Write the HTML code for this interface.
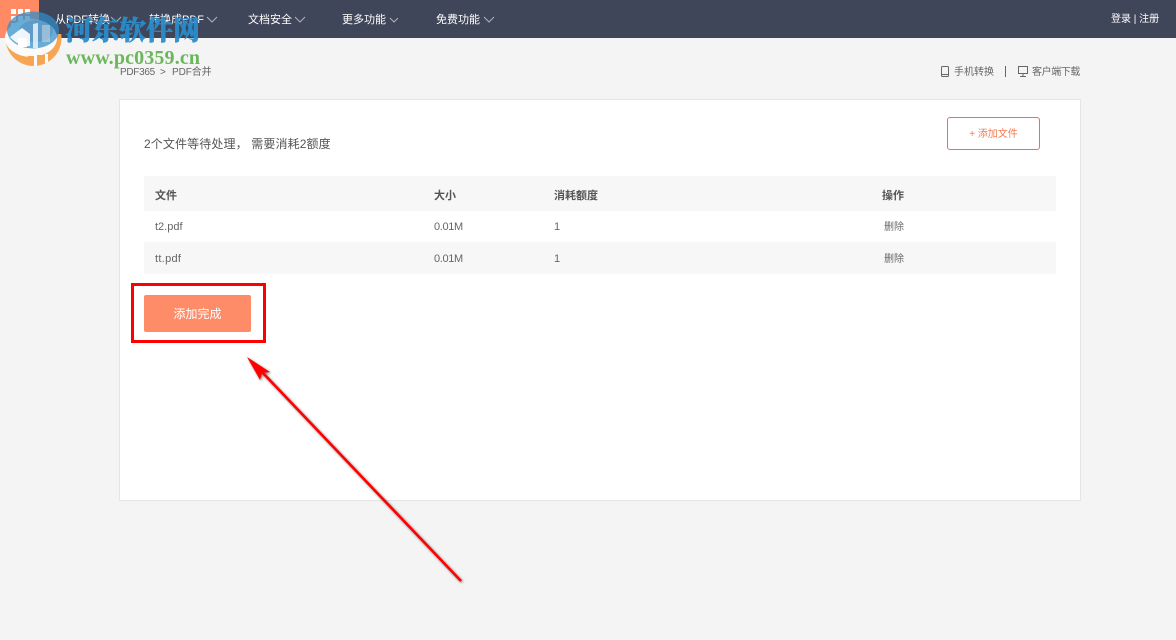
<!DOCTYPE html>
<html><head><meta charset="utf-8"><style>
html,body{margin:0;padding:0}
body{width:1176px;height:640px;background:#f4f4f4;position:relative;overflow:hidden;font-family:"Liberation Sans","Noto Sans CJK SC",sans-serif;color:#555}
.a{position:absolute;white-space:nowrap}
.n{top:12px;font-size:11px;line-height:16px;color:#fff}
.t{font-size:11px;line-height:16px;color:#666}
.h{font-size:11px;line-height:16px;color:#555;font-weight:bold;top:188px}
</style></head><body>
<div class="a" style="left:0;top:0;width:1176px;height:38px;background:#404659"></div>
<div class="a" style="left:0;top:0;width:39px;height:38px;background:#ff8a63"></div>
<svg class="a" style="left:11px;top:9px" width="20" height="20" fill="#fff"><rect y="0" width="5" height="5"/><rect x="7" width="5" height="5"/><rect x="14" width="5" height="5"/><rect y="7" width="5" height="5"/><rect x="7" y="7" width="5" height="5"/><rect x="14" y="7" width="5" height="5"/><rect y="14" width="5" height="5"/><rect x="7" y="14" width="5" height="5"/><rect x="14" y="14" width="5" height="5"/></svg>
<div class="a n" style="left:55px">从PDF转换</div>
<div class="a n" style="left:149px">转换成PDF</div>
<div class="a n" style="left:248px">文档安全</div>
<div class="a n" style="left:342px">更多功能</div>
<div class="a n" style="left:436px">免费功能</div>
<svg class="a" style="left:0;top:0" width="520" height="38" fill="none" stroke="#aeb2bc" stroke-width="1"><path d="M111 17l5 5 5-5M207 17l5 5 5-5M295 17l5 5 5-5M390 18l4 4 4-4M484 17l5 5 5-5"/></svg>
<div class="a" style="left:1111px;top:12px;font-size:10px;line-height:16px;color:#fff">登录 | 注册</div>

<div class="a t" style="left:120px;top:65px;font-size:10px;letter-spacing:-.3px">PDF365</div>
<div class="a t" style="left:160px;top:65px;font-size:10px">&gt;</div>
<div class="a t" style="left:172px;top:65px;font-size:10px;letter-spacing:-.1px">PDF合并</div>
<svg class="a" style="left:939px;top:64px" width="92" height="15" fill="none" stroke="#666"><rect x="2.500" y="2.500" width="7" height="10" rx="1"/><path d="M2.500 10.500h7"/><path d="M79.500 2.500h9v7h-9zM81 12.500h6M84 9.500v3"/></svg>
<div class="a t" style="left:954px;top:65px;font-size:10px">手机转换</div>
<div class="a" style="left:1005px;top:66px;width:1px;height:11px;background:#666"></div>
<div class="a t" style="left:1032px;top:65px;font-size:10px;letter-spacing:-.4px">客户端下载</div>

<div class="a" style="left:119px;top:99px;width:960px;height:400px;background:#fff;border:1px solid #e4e4e4"></div>
<div class="a" style="left:947px;top:117px;width:91px;height:31px;border:1px solid #e8734e;border-radius:3px;text-align:center;font-size:10px;line-height:33px;color:#f47a50">+ 添加文件</div>
<div class="a" style="left:144px;top:136px;font-size:12px;line-height:17px;color:#555;letter-spacing:.12px">2个文件等待处理， 需要消耗2额度</div>

<div class="a" style="left:144px;top:176px;width:912px;height:35px;background:#f7f7f7"></div>
<div class="a" style="left:144px;top:242px;width:912px;height:32px;background:#f7f7f7"></div>
<div class="a h" style="left:155px">文件</div>
<div class="a h" style="left:434px">大小</div>
<div class="a h" style="left:554px">消耗额度</div>
<div class="a h" style="left:882px">操作</div>
<div class="a t" style="left:155px;top:219px">t2.pdf</div>
<div class="a t" style="left:434px;top:219px;letter-spacing:-.35px">0.01M</div>
<div class="a t" style="left:554px;top:219px">1</div>
<div class="a t" style="left:884px;top:220px;font-size:10px">删除</div>
<div class="a t" style="left:155px;top:251px;letter-spacing:.3px">tt.pdf</div>
<div class="a t" style="left:434px;top:251px;letter-spacing:-.35px">0.01M</div>
<div class="a t" style="left:554px;top:251px">1</div>
<div class="a t" style="left:884px;top:252px;font-size:10px">删除</div>

<div class="a" style="left:144px;top:295px;width:107px;height:37px;background:#ff8c69;border-radius:2px;text-align:center;font-size:12px;line-height:39px;color:#fff">添加完成</div>
<div class="a" style="left:131px;top:283px;width:129px;height:54px;border:3px solid #f00"></div>

<svg class="a" style="left:0;top:0;pointer-events:none" width="1176" height="640">
<defs><filter id="s" x="-20%" y="-20%" width="140%" height="140%"><feDropShadow dx="1" dy="1" stdDeviation="1.200" flood-color="#000" flood-opacity=".55"/></filter>
<clipPath id="low"><rect x="0" y="34" width="70" height="36"/></clipPath></defs>
<g filter="url(#s)"><path d="M461 581L262 372" fill="none" stroke="#f00" stroke-width="2.600"/><path d="M247 357l23 15-8 1-2 7z" fill="#f00"/></g>
<circle cx="33.500" cy="38" r="28" fill="#f6a653" clip-path="url(#low)"/>
<ellipse cx="31" cy="38" rx="26" ry="19" fill="#fbfbfb"/>
<ellipse cx="33" cy="30" rx="26" ry="18.500" fill="#2f8dc9" fill-opacity=".72"/>
<ellipse cx="36" cy="31" rx="17" ry="11" fill="#4c7fa8" fill-opacity=".35"/>
<path d="M10 37L22 28l8 6v12c-6 1-14-2-20-9z" fill="#fff" fill-opacity=".9"/>
<path d="M18 38h9v9h-9z" fill="#fff"/>
<path d="M33 24l5-1v25h-5z" fill="#fff" fill-opacity=".75"/>
<path d="M42 25h8v17h-8z" fill="#dfe6ee" fill-opacity=".45"/>
<path d="M28 56h6v9h-6zM37 55h8v8h-8z" fill="#f6a653"/>
<path d="M34 55h3v11h-3zM45 54h3v9h-3z" fill="#fbfbfb"/>
<text x="65" y="40" font-family="'Noto Serif CJK SC',serif" font-size="27" font-weight="900" fill="#2a8ccb" fill-opacity=".95" stroke="#2a8ccb" stroke-width=".4">河东软件网</text>
<text x="66" y="64" font-family="'Liberation Serif',serif" font-size="20" font-weight="bold" fill="#6cb65c" textLength="134" lengthAdjust="spacing">www.pc0359.cn</text>
</svg>
</body></html>
